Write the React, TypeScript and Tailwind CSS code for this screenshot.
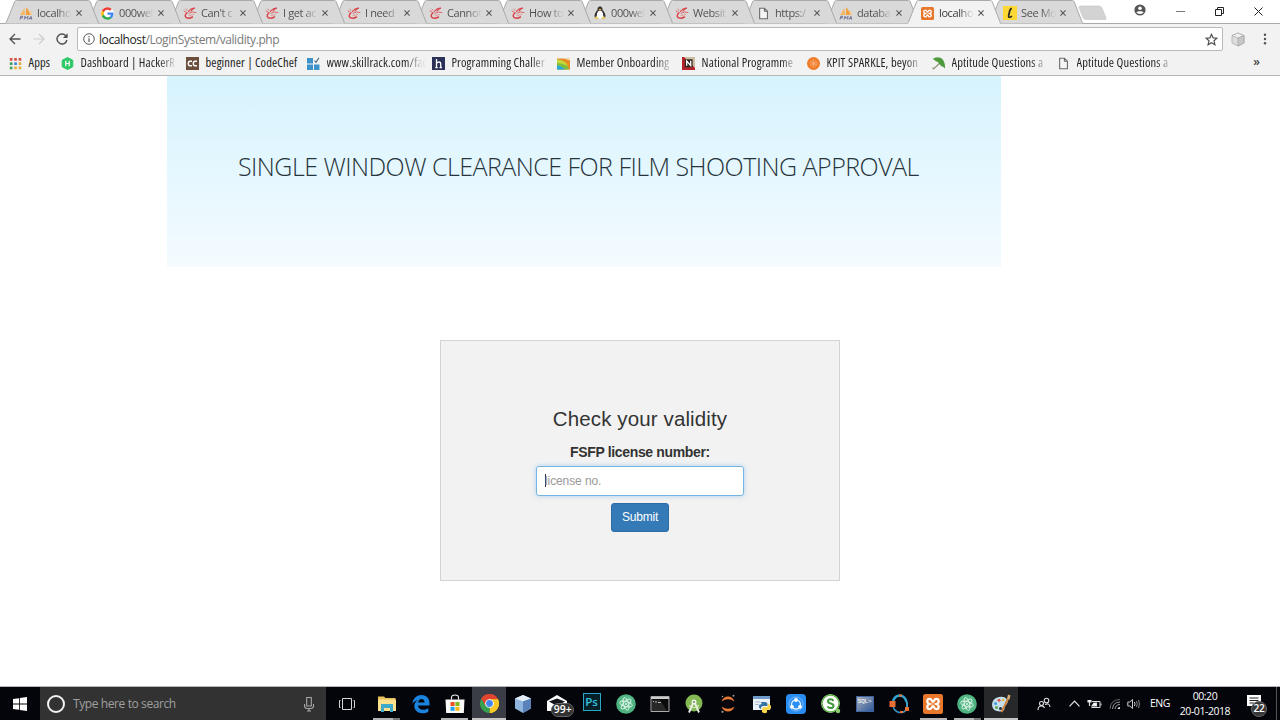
import type { ReactNode } from "react";

const UI = "font-['Open_Sans','Noto_Sans',sans-serif]";

/* ---------- favicons ---------- */

const PmaIcon = () => (
  <svg viewBox="0 0 14 14" className="h-3.5 w-3.5">
    <path d="M1 9 L5.5 2 L6 9Z" fill="#f5b767" />
    <path d="M6.8 9 L7.2 1 Q10 4 11.5 9Z" fill="#f0a040" />
    <path d="M11 9 Q11.500 5.500 10.500 3.500 Q13 6 13.200 9Z" fill="#f7c98b" />
    <path d="M1 13.500 L1.800 10.300 H3.600 L3.200 12 H1.500 M5.200 13.500 L6 10.300 L7 12.300 L9 10.300 L8.600 13.500 M10 13.500 L12 10.300 L12.700 13.500 M10.700 12.500 H12.500" fill="none" stroke="#666a94" strokeWidth="0.900" />
  </svg>
);

const GoogleIcon = () => (
  <svg viewBox="0 0 48 48" className="h-[13px] w-[13px]">
    <circle cx="24" cy="24" r="24" fill="#fff" />
    <path fill="#EA4335" d="M24 10c3.500 0 6.600 1.200 9.100 3.600l6.600-6.600C35.700 3.200 30.300 1 24 1 14.800 1 6.900 6.300 3 14l7.700 6C12.600 14.200 17.800 10 24 10z" />
    <path fill="#4285F4" d="M46 24.500c0-1.600-.1-3.100-.4-4.500H24v8.700h12.400c-.6 2.900-2.200 5.300-4.600 6.900l7.400 5.800C43.500 37.300 46 31.400 46 24.500z" />
    <path fill="#FBBC05" d="M10.700 28.200A14 14 0 0 1 10.700 20L3 14a23 23 0 0 0 0 20.300z" />
    <path fill="#34A853" d="M24 47c6.200 0 11.400-2 15.200-5.600l-7.400-5.800c-2 1.400-4.700 2.300-7.800 2.300-6.200 0-11.400-4.200-13.300-9.800L3 34.300C6.900 42 14.800 47 24 47z" />
  </svg>
);

const SwirlIcon = () => (
  <svg viewBox="0 0 14 14" className="h-3.5 w-3.5" fill="none" strokeLinecap="round">
    <path d="M5.500 5.500 Q7.500 2 12 2 Q9 3 8 5" stroke="#d9474c" strokeWidth="1.200" />
    <path d="M1 5 L3 6 M2.800 3 L4 4.200 M6 7.200 Q9.500 5 13 6.500" stroke="#de686b" strokeWidth="1" />
    <path d="M4 6.800 Q1 9.500 3 11.500 Q6 13 9.500 11" stroke="#d9474c" strokeWidth="1.500" />
    <path d="M6 9.300 Q8.500 9.800 10.500 8.500" stroke="#e48a8b" strokeWidth="0.900" />
  </svg>
);

const TuxIcon = () => (
  <svg viewBox="0 0 14 14" className="h-3.5 w-3.5">
    <path d="M7 .5 C9.300 .5 9.600 2.500 9.500 4 C11.500 6 13 8.500 12.300 11.500 H1.700 C1 8.500 2.600 6 4.500 4 C4.400 2.500 4.700 .5 7 .5Z" fill="#303030" />
    <path d="M7 4.500 C9.500 4.500 10.500 8 10.200 11.500 C9 13 5 13 3.800 11.500 C3.500 8 4.500 4.500 7 4.500Z" fill="#fafafa" />
    <path d="M5.500 3.300 L7 2.700 L8.500 3.300 L7 4.600Z" fill="#e8c13c" />
    <path d="M1 12 L3.500 10 L5.500 12.500 L4.500 13.500Z M13 12 L10.500 10 L8.500 12.500 L9.500 13.500Z" fill="#e6c85f" />
  </svg>
);

const DocIcon = () => (
  <svg viewBox="0 0 12 14" className="h-[13px] w-[11px]" fill="#f5f5f5" stroke="#6b6b6b" strokeWidth="1.200">
    <path d="M1.800 1.200 H7 L10.300 4.500 V12.800 H1.800Z M7 1.200 V4.500 H10.300" />
  </svg>
);

const XamppIcon = ({ className }: { className: string }) => (
  <svg viewBox="0 0 20 20" className={className}>
    <rect width="20" height="20" rx="2.500" fill="#e8762b" />
    <path d="M6.800 4.800 C3.500 4.800 3.500 9 6.500 10 C3.500 11 3.500 15.200 6.800 15.200 C9 15.200 8.700 12.200 10 12.200 C11.300 12.200 11 15.200 13.200 15.200 C16.500 15.200 16.500 11 13.500 10 C16.500 9 16.500 4.800 13.200 4.800 C11 4.800 11.300 7.800 10 7.800 C8.700 7.800 9 4.800 6.800 4.800Z" fill="none" stroke="#fff" strokeWidth="2.200" />
  </svg>
);

const LIcon = () => (
  <svg viewBox="0 0 14 14" className="h-3.5 w-3.5">
    <rect width="14" height="14" fill="#fdd835" />
    <path d="M8.800 2.300 Q7 2.500 6.300 6.500 Q5.300 10.500 5.800 11 Q6.500 11.700 9 10.200" fill="none" stroke="#2b2a20" strokeWidth="1.800" />
  </svg>
);

/* ---------- tab strip ---------- */

const tabs: { title: string; icon: ReactNode; z: string; active?: boolean }[] = [
  { title: "localho", icon: <PmaIcon />, z: "z-[13]" },
  { title: "000wel", icon: <GoogleIcon />, z: "z-[12]" },
  { title: "Can't c", icon: <SwirlIcon />, z: "z-[11]" },
  { title: "I get ac", icon: <SwirlIcon />, z: "z-[10]" },
  { title: "I need", icon: <SwirlIcon />, z: "z-[9]" },
  { title: "Cannot", icon: <SwirlIcon />, z: "z-[8]" },
  { title: "How to", icon: <SwirlIcon />, z: "z-[7]" },
  { title: "000wel", icon: <TuxIcon />, z: "z-[6]" },
  { title: "Websit", icon: <SwirlIcon />, z: "z-[5]" },
  { title: "https:/", icon: <DocIcon />, z: "z-[4]" },
  { title: "databa", icon: <PmaIcon />, z: "z-[3]" },
  { title: "localho", icon: <XamppIcon className="h-[13px] w-[13px]" />, z: "z-20", active: true },
  { title: "See Mo", icon: <LIcon />, z: "z-[2]" },
];

function Tab({ title, icon, z, active }: (typeof tabs)[number]) {
  return (
    <div className={`relative flex h-6 w-[82px] shrink-0 items-center pt-[2px] pl-[13.500px] ${z}`}>
      <svg viewBox="0 0 94 24" className="absolute top-0 left-0 -z-10 h-6 w-[94px]">
        <path
          d="M0 23.500 L1.500 22 L9.500 2 Q10 .5 11.500 .5 H83.500 Q84.700 .5 85.300 2 L93 22 L94 23.500"
          fill={active ? "#f2f2f2" : "#d9d9d9"}
          stroke="#aaaaaa"
        />
        {active && <path d="M1.500 23.500 H92.500" stroke="#f2f2f2" strokeWidth="1.500" />}
      </svg>
      <span className="flex w-3.5 shrink-0 justify-center">{icon}</span>
      <span
        className={`ml-[4.500px] w-[36px] shrink-0 bg-linear-to-r from-55% to-92% bg-clip-text text-[11px] tracking-[-0.400px] whitespace-nowrap text-transparent ${
          active ? "from-[#333] to-[#ddd]" : "from-[#4c4c4c] to-[#ccc]"
        }`}
      >
        {title}
      </span>
      <svg viewBox="0 0 7 7" className="ml-[3px] h-[6px] w-[6px] shrink-0" stroke="#5a5a5a" strokeWidth="1.300">
        <path d="M.5 .5 L6.500 6.500 M6.500 .5 L.5 6.500" />
      </svg>
    </div>
  );
}

function TabStrip() {
  return (
    <div className="relative isolate flex h-6 shrink-0 border-b border-[#aaa] bg-white pl-[5px]">
      {tabs.map((t, i) => (
        <Tab key={i} {...t} />
      ))}
      <svg viewBox="0 0 30 16" className="mt-[5px] ml-[6px] h-4 w-[30px]">
        <path d="M3.500 1 H22 Q24 1 25 3 L29 13 Q29.500 14.500 28 14.500 H8.500 Q7 14.500 6 12.500 L2 2.500 Q1.800 1 3.500 1Z" fill="#d3d3d3" stroke="#c4c4c4" strokeWidth="0.600" />
      </svg>
      <div className="flex flex-1 items-start justify-end pr-[17px] text-[#333]">
        <svg viewBox="0 0 12 12" className="mt-[4px] mr-[30px] h-3 w-3">
          <circle cx="6" cy="6" r="5.600" fill="#555" />
          <circle cx="6" cy="4.200" r="1.800" fill="#fff" />
          <path d="M2.400 8.600 C3.500 6.900 8.500 6.900 9.600 8.600 C8.500 10.300 3.500 10.300 2.400 8.600Z" fill="#fff" />
        </svg>
        <svg viewBox="0 0 9 9" className="mt-[7px] mr-[30px] h-[9px] w-[9px]" stroke="#777">
          <path d="M0 4.500 H9" />
        </svg>
        <svg viewBox="0 0 9 9" className="mt-[7px] mr-[30px] h-[9px] w-[9px]" fill="none" stroke="#222">
          <path d="M.5 2.500 H6.500 V8.500 H.5Z M2.500 2.500 V.5 H8.500 V6.500 H6.500" />
        </svg>
        <svg viewBox="0 0 9 9" className="mt-[7px] h-[9px] w-[9px]" stroke="#222">
          <path d="M.5 .5 L8.500 8.500 M8.500 .5 L.5 8.500" />
        </svg>
      </div>
    </div>
  );
}

/* ---------- address bar ---------- */

function AddressBar() {
  return (
    <div className="flex h-[30px] shrink-0 items-center bg-[#f2f2f2] pr-[13px] pl-[9px]">
      <svg viewBox="0 0 12 12" className="h-3 w-3" fill="none" stroke="#505050" strokeWidth="1.300">
        <path d="M11.500 6 H1.200 M6 1 L1 6 L6 11" />
      </svg>
      <svg viewBox="0 0 12 12" className="ml-3 h-3 w-3" fill="none" stroke="#cdcdcd" strokeWidth="1.200">
        <path d="M.5 6 H10.800 M6 1 L11 6 L6 11" />
      </svg>
      <svg viewBox="0 0 12 12" className="ml-[11px] h-3 w-3" fill="none" stroke="#505050" strokeWidth="1.400">
        <path d="M10.200 3.300 A5 5 0 1 0 10.900 7" />
        <path d="M11.600 .3 V5 H6.900Z" fill="#505050" stroke="none" />
      </svg>
      <div className="ml-[9px] flex h-6 w-[1146px] items-center rounded-[2px] border border-[#b9b9b9] bg-white pr-[4px] pl-[5px]">
        <svg viewBox="0 0 12 12" className="h-3 w-3" fill="none" stroke="#5a5a5a">
          <circle cx="6" cy="6" r="5.300" />
          <path d="M6 5.300 V9 M6 3 V4.300" strokeWidth="1.200" />
        </svg>
        <span className="ml-[4px] pt-px text-[12px] tracking-[-0.420px] whitespace-nowrap text-[#7a7a7a]">
          <span className="text-[#222]">localhost</span>/LoginSystem/validity.php
        </span>
        <svg viewBox="0 0 24 24" className="ml-auto h-[13px] w-[13px]" fill="none" stroke="#505050" strokeWidth="2.200">
          <path d="M12 2.500 L14.900 8.900 L22 9.500 L16.700 14.400 L18.300 21.700 L12 17.800 L5.700 21.700 L7.300 14.400 L2 9.500 L9.100 8.900Z" />
        </svg>
      </div>
      <svg viewBox="0 0 14 15" className="ml-2 h-[15px] w-3.5" stroke="#a5a5a5" strokeWidth="0.700">
        <path d="M7 1 L13 3.600 V11 L7 14 L1 11 V3.600Z" fill="#ddd" />
        <path d="M1 3.600 L7 6.200 L13 3.600 L7 1Z" fill="#eee" />
        <path d="M7 6.200 V14 L13 11 V3.600Z" fill="#c7c7c7" />
      </svg>
      <svg viewBox="0 0 4 14" className="ml-auto h-3.5 w-1" fill="#505050">
        <circle cx="2" cy="2.700" r="1.200" />
        <circle cx="2" cy="7" r="1.200" />
        <circle cx="2" cy="11.300" r="1.200" />
      </svg>
    </div>
  );
}

/* ---------- bookmarks ---------- */

const bookmarks: { label: string; width: string; icon: ReactNode; fade?: boolean }[] = [
  {
    label: "Apps",
    width: "w-[52px]",
    icon: (
      <svg viewBox="0 0 13 13" className="h-[13px] w-[13px]">
        <path d="M.8 1 h2.700 v2.700 h-2.700z M5.200 1 h2.700 v2.700 h-2.700z M9.600 1 h2.700 v2.700 h-2.700z" fill="#d9534a" />
        <path d="M.8 5.300 h2.700 v2.700 h-2.700z" fill="#3f9e5a" />
        <path d="M5.200 5.300 h2.700 v2.700 h-2.700z" fill="#4484cf" />
        <path d="M9.600 5.300 h2.700 v2.700 h-2.700z" fill="#e0ad3d" />
        <path d="M.8 9.600 h2.700 v2.700 h-2.700z" fill="#3f9e5a" />
        <path d="M5.200 9.600 h2.700 v2.700 h-2.700z M9.600 9.600 h2.700 v2.700 h-2.700z" fill="#e0ad3d" />
      </svg>
    ),
  },
  {
    label: "Dashboard | HackerR",
    width: "w-[125px]",
    fade: true,
    icon: (
      <svg viewBox="0 0 13 13" className="h-[13px] w-[13px]">
        <path d="M6.500 .5 L11.800 3.300 V9.700 L6.500 12.500 L1.200 9.700 V3.300Z" fill="#2ec866" stroke="#2ec866" strokeLinejoin="round" />
        <path d="M4.800 3.800 V9.200 M8.200 3.800 V9.200 M4.800 6.500 H8.200" stroke="#fff" strokeWidth="1.200" />
      </svg>
    ),
  },
  {
    label: "beginner | CodeChef",
    width: "w-[121px]",
    icon: (
      <svg viewBox="0 0 13 13" className="h-[13px] w-[13px]">
        <rect width="13" height="13" fill="#6b4f3c" />
        <path d="M6 4.300 H4 Q2.300 4.300 2.300 6.500 Q2.300 8.700 4 8.700 H6 M11 4.300 H9 Q7.300 4.300 7.300 6.500 Q7.300 8.700 9 8.700 H11" fill="none" stroke="#fff" strokeWidth="1.400" />
      </svg>
    ),
  },
  {
    label: "www.skillrack.com/fac",
    width: "w-[125px]",
    fade: true,
    icon: (
      <svg viewBox="0 0 13 13" className="h-[13px] w-[13px]">
        <path d="M0 1 H6 V6.500 H0Z M0 7.500 H6 V13 H0Z M7 7.500 H12.500 V13 H7Z" fill="#3b93c9" />
        <path d="M7.500 3.500 L9 5.300 L12 .8" fill="none" stroke="#44647a" strokeWidth="1.100" />
      </svg>
    ),
  },
  {
    label: "Programming Challer",
    width: "w-[125px]",
    fade: true,
    icon: (
      <svg viewBox="0 0 13 13" className="h-[13px] w-[13px]">
        <rect width="13" height="13" fill="#2b3157" />
        <path d="M4.500 2 V10.500 M4.500 6.500 Q5.500 5 7 5 Q8.700 5 8.700 7 V10.500 M3.300 10.700 H5.800 M7.500 10.700 H10" fill="none" stroke="#fff" strokeWidth="1.300" />
      </svg>
    ),
  },
  {
    label: "Member Onboarding",
    width: "w-[125px]",
    fade: true,
    icon: (
      <svg viewBox="0 0 13 13" className="h-[13px] w-[13px]">
        <path d="M0 1.500 H13 V12.500 H0Z" fill="#e98a24" />
        <path d="M5 1.500 H13 V3.500 Q9 2 5 1.500Z" fill="#f5e3c0" />
        <path d="M0 2.500 Q10 3 12 12.500 H0Z" fill="#7fbd3a" />
        <path d="M0 2.500 Q8 3 11 9 Q5 6 0 6Z" fill="#c8d93a" />
        <path d="M0 8.500 Q5 9 8 12.500 H0Z" fill="#29a9e0" />
      </svg>
    ),
  },
  {
    label: "National Programme",
    width: "w-[125px]",
    fade: true,
    icon: (
      <svg viewBox="0 0 13 13" className="h-[13px] w-[13px]">
        <rect width="13" height="13" fill="#b4232b" />
        <path d="M2 0 H13 V11Z" fill="#cbbd9f" />
        <rect x="2.800" y="2.300" width="7.800" height="8" fill="#2f2523" />
        <path d="M4.700 8.800 V4 L8.700 8.600 V3.800" fill="none" stroke="#fff" strokeWidth="1.300" />
      </svg>
    ),
  },
  {
    label: "KPIT SPARKLE, beyon",
    width: "w-[125px]",
    fade: true,
    icon: (
      <svg viewBox="0 0 13 13" className="h-[13px] w-[13px]">
        <circle cx="6.500" cy="6.500" r="6.500" fill="#f07c29" />
        <g fill="none" stroke="#f9b07c" strokeWidth="0.700">
          <circle cx="6.500" cy="6.500" r="1.500" />
          <circle cx="6.500" cy="6.500" r="3.500" strokeDasharray="1.500 1" />
          <path d="M6.500 2.500 V10.500 M3 4.500 L10 8.500 M3 8.500 L10 4.500" />
        </g>
      </svg>
    ),
  },
  {
    label: "Aptitude Questions a",
    width: "w-[125px]",
    fade: true,
    icon: (
      <svg viewBox="0 0 13 13" className="h-[13px] w-[13px]">
        <path d="M8 6 L1.500 12 L.5 10.500" fill="none" stroke="#8b8b6f" strokeWidth="1.100" />
        <path d="M.5 2 Q4 -.5 8.500 .7 Q13.500 3.500 13 11.500 Q11 9 9.800 9.500 L6.500 6.200 Q6.500 4 4 4.500 Q3 2.500 .5 2Z" fill="#4f9a3c" />
      </svg>
    ),
  },
  { label: "Aptitude Questions a", width: "w-[125px]", fade: true, icon: <DocIcon /> },
];

function BookmarksBar() {
  return (
    <div className="flex h-[22px] shrink-0 items-center border-b border-[#b6b6b6] bg-[#f2f2f2] pb-[3px] pl-[9px]">
      {bookmarks.map((b, i) => (
        <div key={i} className={`flex shrink-0 items-center ${b.width}`}>
          <span className="flex w-[13px] shrink-0 justify-center">{b.icon}</span>
          <span
            className={`ml-[6.500px] text-[12.500px] leading-[18px] font-stretch-[75%] tracking-[0.120px] whitespace-nowrap ${
              b.fade
                ? "w-[98px] bg-linear-to-r from-[#222] from-80% to-[#ddd] to-96% bg-clip-text text-transparent"
                : "text-[#222]"
            }`}
          >
            {b.label}
          </span>
        </div>
      ))}
      <span className="mr-5 ml-auto pb-[2px] text-[12px] leading-[18px] font-semibold text-[#444]">»</span>
    </div>
  );
}

/* ---------- page ---------- */

function Page() {
  return (
    <main className="min-h-0 flex-1 bg-white font-['Liberation_Sans',sans-serif]">
      <header className="ml-[167px] flex h-[191px] w-[834px] items-center bg-linear-to-b from-[#d6f3fe] to-[#f4fbff] pb-[10px] pl-[71px]">
        <h1 className="font-['Open_Sans',sans-serif] text-[25px] font-light tracking-[-0.530px] whitespace-nowrap text-[#26343c]">
          SINGLE WINDOW CLEARANCE FOR FILM SHOOTING APPROVAL
        </h1>
      </header>
      <form
        className="mx-auto mt-[73px] flex h-[241px] w-[400px] flex-col items-center border border-[#d3d3d3] bg-[#f2f2f2] text-[#333]"
        onSubmit={(e) => e.preventDefault()}
      >
        <h2 className="mt-[66px] text-[20.500px] leading-6 tracking-[0.120px]">Check your validity</h2>
        <label htmlFor="license" className="mt-[11px] text-[14px] leading-5 font-bold tracking-[-0.350px]">
          FSFP license number:
        </label>
        <div className="mt-[4px] flex h-[30px] w-[208px] items-center rounded-[3px] border border-[#76b4e2] bg-white pb-px pl-2 shadow-[0_0_5px_rgba(102,175,233,0.5)]">
          <span className="h-[13px] w-px bg-[#333]" />
          <input
            id="license"
            placeholder="license no."
            className="-ml-px w-44 text-[12px] tracking-[-0.100px] outline-none placeholder:text-[#999]"
          />
        </div>
        <button className="mt-[7px] h-[29px] w-[58px] rounded-[3px] border border-[#2e6da4] bg-[#337ab7] pb-px text-[12px] tracking-[-0.200px] text-white">
          Submit
        </button>
      </form>
    </main>
  );
}

/* ---------- taskbar ---------- */

const AtomIcon = () => (
  <svg viewBox="0 0 20 20" className="h-5 w-5">
    <circle cx="10" cy="10" r="9.800" fill="#4fb381" />
    <circle cx="10" cy="8" r="6.500" fill="#66c493" opacity="0.500" />
    <g fill="none" stroke="#e3f6ea" strokeWidth="0.900">
      <ellipse cx="10" cy="10" rx="2.500" ry="6.500" transform="rotate(-15 10 10)" />
      <ellipse cx="10" cy="10" rx="2.500" ry="6.500" transform="rotate(45 10 10)" />
      <ellipse cx="10" cy="10" rx="2.500" ry="6.500" transform="rotate(105 10 10)" />
    </g>
    <circle cx="10" cy="10" r="1" fill="#e3f6ea" />
  </svg>
);

const taskIcons: { icon: ReactNode; cell?: string; bar?: string }[] = [
  {
    bar: "w-[27px] bg-linear-to-r from-[#b5b5b5] from-74% to-[#777] to-74%",
    icon: (
      <svg viewBox="0 0 20 20" className="h-5 w-5">
        <path d="M1 2.500 H7 L8.500 4 H18.500 V17 H1Z" fill="#e9c05c" />
        <path d="M1 5.500 H19 V17 H1Z" fill="#fbe08d" />
        <path d="M4 10 H16 V18 H13 V14 H7 V18 H4Z" fill="#3fa9c9" />
      </svg>
    ),
  },
  {
    icon: (
      <svg viewBox="0 0 20 20" className="h-5 w-5">
        <path d="M1.500 9.500 C2 4 6 1 10.500 1 C16 1 18.500 5 18.500 9 V11.500 H7 C7.200 14.500 9.500 15.800 12.200 15.800 C14.300 15.800 16 15.200 17.300 14.300 V18 C15.500 19 13.500 19.300 11.500 19.300 C6.500 19.300 3.300 16 3.300 11.800 C3.300 9.300 4.800 7.200 7.300 5.900 C5 6.200 3 7.400 1.500 9.500Z M7.200 8.400 H13.500 C13.500 6.300 12.500 5 10.500 5 C8.700 5 7.500 6.500 7.200 8.400Z" fill="#1a83dd" fillRule="evenodd" />
      </svg>
    ),
  },
  {
    bar: "w-[27px] bg-[#b5b5b5]",
    icon: (
      <svg viewBox="0 0 20 20" className="h-5 w-5">
        <path d="M6.500 5.500 V3.500 Q6.500 1 10 1 Q13.500 1 13.500 3.500 V5.500" fill="none" stroke="#eee" strokeWidth="1.200" />
        <path d="M.5 5.500 H19.500 L18.800 19 H1.200Z" fill="#fafafa" />
        <path d="M5.500 8 H9.600 V12 H5.500Z" fill="#f05023" />
        <path d="M10.400 8 H14.500 V12 H10.400Z" fill="#7dbb1e" />
        <path d="M5.500 12.800 H9.600 V16.800 H5.500Z" fill="#1ea5ee" />
        <path d="M10.400 12.800 H14.500 V16.800 H10.400Z" fill="#fdb813" />
      </svg>
    ),
  },
  {
    cell: "bg-[#3a3d46]",
    bar: "w-full bg-[#c4c4c4]",
    icon: (
      <svg viewBox="0 0 48 48" className="h-[19px] w-[19px]">
        <path d="M24 24 L3.200 12 A24 24 0 0 1 44.800 12Z" fill="#e0452f" />
        <path d="M24 24 L44.800 12 A24 24 0 0 1 24 48Z" fill="#fbc926" />
        <path d="M24 24 L24 48 A24 24 0 0 1 3.200 12Z" fill="#35a04f" />
        <path d="M24 13 H45.300 L44.800 12 A24 24 0 0 0 3.200 12 L14.500 30Z" fill="#e0452f" />
        <path d="M34 29 L24 48 A24 24 0 0 0 45.300 13 H24Z" fill="#fbc926" />
        <circle cx="24" cy="24" r="11" fill="#fff" />
        <circle cx="24" cy="24" r="8.600" fill="#4387ee" />
      </svg>
    ),
  },
  {
    icon: (
      <svg viewBox="0 0 20 20" className="h-5 w-5">
        <path d="M10 1 L18 4.500 V14.500 L10 19 L2 14.500 V4.500Z" fill="#8fb4dd" />
        <path d="M10 1 L18 4.500 L10 7.500 L2 4.500Z" fill="#e3edf8" />
        <path d="M10 7.500 V19 L18 14.500 V4.500Z" fill="#5b82b8" />
      </svg>
    ),
  },
  {
    icon: (
      <span className="relative block h-5 w-5">
        <svg viewBox="0 0 20 20" className="h-5 w-5">
          <path d="M0 7 L10 1 L20 7 V17 H0Z" fill="#fff" />
          <path d="M2 7.500 L10 4.500 L18 7.500 L10 12Z" fill="#12141c" />
        </svg>
        <span className="absolute top-[9px] left-[4px] flex h-[14px] w-[23px] items-center justify-center rounded-full border border-[#666] bg-[#333] text-[10.500px] font-semibold text-white">
          99+
        </span>
      </span>
    ),
  },
  {
    icon: (
      <span className="mb-[3px] flex h-[18px] w-[18px] items-center justify-center border-[1.500px] border-[#27a9c4] bg-[#06202a] text-[11.500px] leading-none font-semibold text-[#35c3e0]">
        Ps
      </span>
    ),
  },
  { icon: <AtomIcon /> },
  {
    icon: (
      <svg viewBox="0 0 20 18" className="h-[18px] w-5">
        <path d="M1 1.500 H19 V16.500 H1Z" fill="#0b0b0b" stroke="#aaa" />
        <path d="M1 2 H19 V4 H1Z" fill="#ccc" />
        <path d="M2 5 L10 5 L17 16 H2Z" fill="#444" opacity="0.500" />
        <path d="M3 6 L4 7 M5 7 H7 M8 7.500 H11" stroke="#ddd" strokeWidth="0.800" />
      </svg>
    ),
  },
  {
    icon: (
      <svg viewBox="0 0 20 20" className="h-5 w-5">
        <circle cx="10" cy="9" r="8.500" fill="#83b852" />
        <path d="M10 7 L5 18.500 M10 7 L15 18.500" stroke="#e8f0e3" strokeWidth="1.900" />
        <path d="M5 11.500 Q10 15.500 15 11.500" stroke="#dcebd0" fill="none" strokeWidth="1.100" />
        <circle cx="10" cy="8" r="2.500" fill="#f2f5ee" />
        <circle cx="10" cy="8" r="1" fill="#638a49" />
      </svg>
    ),
  },
  {
    icon: (
      <svg viewBox="0 0 20 20" className="h-5 w-5">
        <path d="M3.500 7.500 Q5.500 2.500 10 2.500 Q14.500 2.500 16.500 7.500 Q13.500 5.200 10 5.200 Q6.500 5.200 3.500 7.500Z M3.500 12.500 Q5.500 17.500 10 17.500 Q14.500 17.500 16.500 12.500 Q13.500 14.800 10 14.800 Q6.500 14.800 3.500 12.500Z" fill="#ec7a33" />
        <circle cx="4.500" cy="2.500" r=".8" fill="#999" />
        <circle cx="15.500" cy="1.700" r="1" fill="#999" />
        <circle cx="4.500" cy="17.800" r="1.100" fill="#999" />
      </svg>
    ),
  },
  {
    icon: (
      <svg viewBox="0 0 20 20" className="h-5 w-5">
        <path d="M1 2 H18 V16 H1Z" fill="#edf2f6" />
        <path d="M1 2 H18 V5 H1Z" fill="#6f9bc8" />
        <path d="M3 8 H8 M3 10.500 H7" stroke="#a9bccb" />
        <path d="M8.500 8 H13 Q15.500 8 15.500 10.500 V12 H11 Q9 12 9 15 Q6.500 14.500 7 11.500 Q7.500 10 10 10Z" fill="#3673a5" />
        <path d="M16 10 Q19.500 10.500 19 14 Q18.500 16 16 16 H15 V18.500 Q12 20 10 18 V15 Q10 13.300 12 13 H15.500Z" fill="#fcd64d" />
      </svg>
    ),
  },
  {
    icon: (
      <svg viewBox="0 0 20 20" className="h-5 w-5">
        <rect width="20" height="20" rx="4" fill="#2a8df1" />
        <circle cx="10" cy="10" r="7" fill="none" stroke="#8cc4fa" strokeWidth="0.800" />
        <circle cx="10" cy="10.500" r="4.500" fill="none" stroke="#dcefff" strokeWidth="1.300" />
        <circle cx="10" cy="6" r="1.900" fill="#fff" />
        <circle cx="6" cy="12.800" r="1.900" fill="#fff" />
        <circle cx="14" cy="12.800" r="1.900" fill="#fff" />
      </svg>
    ),
  },
  {
    icon: (
      <svg viewBox="0 0 20 20" className="h-5 w-5">
        <circle cx="9.500" cy="9.500" r="9.200" fill="#fff" />
        <circle cx="9.500" cy="9.500" r="8.500" fill="none" stroke="#5eb545" strokeWidth="1.400" />
        <circle cx="17" cy="17" r="2.200" fill="#8ccf70" />
        <path d="M12.500 6.900 Q11.500 5.300 9.500 5.300 Q7 5.300 7 7.200 Q7 9 9.700 9.500 Q12.500 10 12.500 11.900 Q12.500 14 9.600 14 Q7.600 14 6.500 12.500" fill="none" stroke="#3f963a" strokeWidth="2" />
      </svg>
    ),
  },
  {
    icon: (
      <span className="flex h-4 w-[18px] border border-[#3e62a0] bg-linear-to-br from-[#a9aeb5] to-[#31589b] pt-[2px] pl-[1px] font-['Liberation_Mono',monospace] text-[6px] leading-[6px] tracking-[-0.200px] text-white">
        SQL&gt;
      </span>
    ),
  },
  {
    icon: (
      <svg viewBox="0 0 20 20" className="h-5 w-5" fill="none">
        <path d="M4 7 Q6 1.500 11 1.500 Q16 2 17.500 8" stroke="#34a4cf" strokeWidth="2.400" />
        <path d="M4 12 Q5 17 10 18.500 Q15 19 17 16" stroke="#3c8fb8" strokeWidth="1.500" />
        <path d="M18 8 V14" stroke="#3a9bc4" strokeWidth="2" />
        <path d="M.5 7 H6.500 V13 H.5Z M10 .5 H13 V2.500 H10Z M16 13 H20 V17 H16Z M11 17 H14 V19 H11Z" fill="#ea6f32" />
      </svg>
    ),
  },
  { icon: <XamppIcon className="h-5 w-5" />, bar: "w-[27px] bg-[#b5b5b5]" },
  { icon: <AtomIcon />, bar: "w-[27px] bg-linear-to-r from-[#b5b5b5] from-74% to-[#777] to-74%" },
  {
    cell: "bg-[#27282a]",
    bar: "w-full bg-[#c4c4c4]",
    icon: (
      <svg viewBox="0 0 20 20" className="h-5 w-5">
        <path d="M1 11 Q1 4.500 8 3 Q15 2 16.500 7 Q17 10 14 11 Q12 12 13.500 14 Q14 17 9 17.500 Q1.500 17.500 1 11Z" fill="#c4deee" />
        <circle cx="4.500" cy="9.500" r="1.500" fill="#3d9ad8" />
        <circle cx="8" cy="6.200" r="1.500" fill="#df5644" />
        <circle cx="12" cy="6" r="1.300" fill="#efb63f" />
        <circle cx="5.500" cy="13.500" r="1.500" fill="#58a846" />
        <circle cx="9.500" cy="14.500" r="1.500" fill="#222c38" />
        <path d="M10.500 18 L17.500 4" stroke="#cd853f" strokeWidth="2" />
        <path d="M16 5 L17 .5 L19.500 1.500 L18.500 5.500Z" fill="#d8ae77" />
      </svg>
    ),
  },
];

function Taskbar() {
  return (
    <footer className="flex h-[34px] shrink-0 border-t border-[#b5b8bb] bg-[#04050b] text-white">
      <div className="flex w-10 items-center justify-center">
        <svg viewBox="0 0 14 14" className="h-3.5 w-3.5" fill="#fff">
          <path d="M0 2 L6 1.200 V6.600 H0Z M6.800 1.100 L14 0 V6.600 H6.800Z M0 7.400 H6 V12.800 L0 12Z M6.800 7.400 H14 V14 L6.800 12.900Z" />
        </svg>
      </div>
      <div className="flex w-[286px] items-center bg-[#323232] pr-[11px] pl-[7px]">
        <span className="h-[18px] w-[18px] rounded-full border-[2.500px] border-[#f2f2f2]" />
        <span className="ml-2 text-[12px] tracking-[-0.400px] text-[#a0a0a0]">Type here to search</span>
        <svg viewBox="0 0 12 16" className="ml-auto h-4 w-3" fill="none" stroke="#a8a8a8" strokeWidth="1.100">
          <path d="M3.700 1.500 H8.300 V10 H3.700Z M1.500 8 V10.500 Q2 12.500 4 12.500 H8 Q10 12.500 10.500 10.500 V8 M6 12.500 V15 M4 15 H8" />
        </svg>
      </div>
      <div className="flex w-[43.500px] items-center justify-center pr-[2px]">
        <svg viewBox="0 0 18 14" className="h-3.5 w-[18px]" fill="none" stroke="#d5d5d5">
          <path d="M4.500 1.500 H13.500 V12.500 H4.500Z M2.500 3.500 H1.500 V10.500 H2.500 M15.500 3.500 H16.500 V10.500 H15.500" />
        </svg>
      </div>
      {taskIcons.map((t, i) => (
        <div key={i} className={`flex w-[34.160px] shrink-0 flex-col items-center ${t.cell ?? ""}`}>
          <div className="flex flex-1 items-center justify-center pt-[2px]">{t.icon}</div>
          <div className={`h-[2px] ${t.bar ?? ""}`} />
        </div>
      ))}
      <div className="flex flex-1 items-center pl-[18.500px]">
        <svg viewBox="0 0 14 14" className="h-3.5 w-3.5 shrink-0" fill="none" stroke="#ddd" strokeWidth="1.100">
          <circle cx="9.500" cy="3.500" r="2.300" />
          <circle cx="4.500" cy="6.500" r="2" />
          <path d="M1 13 Q1 9 4.500 9 Q7 9 7.500 11 M8 7.500 Q12.500 5.500 13 10" />
        </svg>
        <svg viewBox="0 0 11 7" className="ml-[18px] h-[7px] w-[11px] shrink-0" fill="none" stroke="#e5e5e5" strokeWidth="1.200">
          <path d="M.5 6.300 L5.500 1 L10.500 6.300" />
        </svg>
        <svg viewBox="0 0 15 10" className="ml-[7px] h-[10px] w-[15px] shrink-0" fill="none" stroke="#ddd">
          <path d="M5 2.500 H13 V8.500 H4.500 M14 4.500 V6.500" />
          <path d="M7 4 H9.500 V7 H5Z M1 1 V3 H4 V1 M2.500 3 V7" fill="#fff" strokeWidth="1.200" />
        </svg>
        <svg viewBox="0 0 12 12" className="ml-[7px] h-3 w-3 shrink-0" fill="none" stroke="#999">
          <path d="M1 11 Q1.500 1.500 11 1.500" stroke="#666" />
          <path d="M3.500 11 Q4 4 11 4 M6 11 Q6.500 6.500 11 6.500" />
          <path d="M8.500 11 Q8.500 9 11 9 V11Z" fill="#ddd" stroke="none" />
        </svg>
        <svg viewBox="0 0 14 12" className="ml-[6px] h-3 w-3.5 shrink-0" fill="none" stroke="#ccc">
          <path d="M.8 4 H2.800 L5.500 1.500 V10.500 L2.800 8 H.8Z M7.500 4 Q8.500 6 7.500 8" />
          <path d="M9.500 3 Q11 6 9.500 9 M11.500 2 Q13.500 6 11.500 10" stroke="#888" />
        </svg>
        <span className="ml-[9px] w-[21px] shrink-0 text-[10.500px] tracking-[-0.500px]">ENG</span>
        <div className="ml-[7px] flex w-[54px] shrink-0 flex-col items-center text-[10.500px] leading-[15px] tracking-[-0.450px] whitespace-nowrap">
          <span>00:20</span>
          <span>20-01-2018</span>
        </div>
        <span className="relative ml-[15px] block h-[18px] w-[22px] shrink-0">
          <svg viewBox="0 0 14 14" className="h-3.5 w-3.5">
            <path d="M0 0 H14 V11 H8 L5 14 V11 H0Z" fill="#fff" />
            <path d="M2.500 3 H11.500 M2.500 5.500 H11.500 M2.500 8 H7" stroke="#222" strokeWidth="1.100" />
          </svg>
          <span className="absolute top-[6px] left-[4px] flex h-4 w-4 items-center justify-center rounded-full border border-[#666] bg-[#383838] text-[10px] font-semibold tracking-[-0.300px]">
            22
          </span>
        </span>
        <span className="mr-[3px] ml-auto h-full w-px bg-[#555]" />
      </div>
    </footer>
  );
}

export default function App() {
  return (
    <div className={`flex h-[720px] w-[1280px] flex-col overflow-hidden bg-white ${UI}`}>
      <TabStrip />
      <AddressBar />
      <BookmarksBar />
      <Page />
      <Taskbar />
    </div>
  );
}
